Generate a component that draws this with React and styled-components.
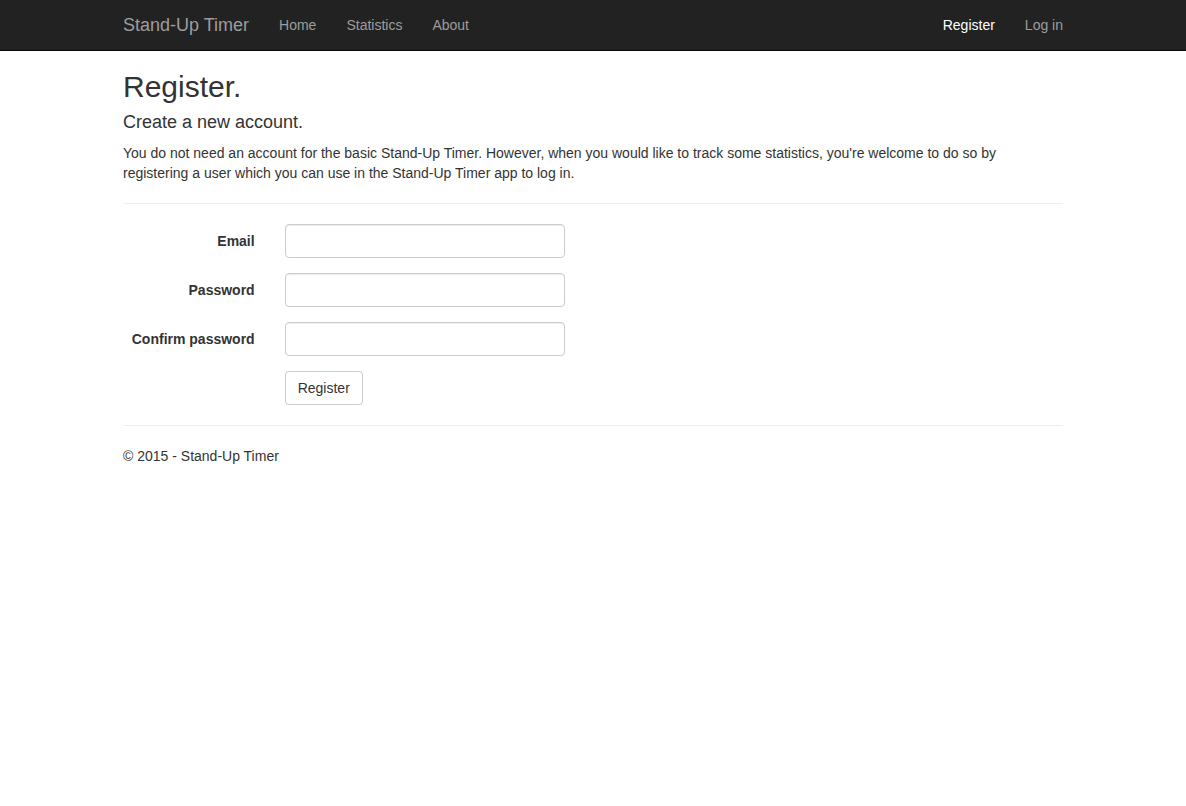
import styled, { createGlobalStyle } from "styled-components";

const GlobalStyle = createGlobalStyle`
  html, body {
    margin: 0;
    padding: 0;
    background: #fff;
  }
  body {
    font-family: "Liberation Sans", Arial, Helvetica, sans-serif;
    font-size: 14px;
    line-height: 1.42857143;
    color: #333;
  }
  * {
    box-sizing: border-box;
  }
`;

const Navbar = styled.nav`
  height: 51px;
  margin-bottom: -1px;
  background-color: #222;
  border-bottom: 1px solid #080808;
`;

const NavContainer = styled.div`
  width: 970px;
  margin: 0 auto;
  padding: 0 15px;
  display: flex;
  align-items: flex-start;
`;

const Brand = styled.a`
  height: 50px;
  padding: 15px;
  margin-left: -15px;
  font-size: 18px;
  line-height: 20px;
  color: #9d9d9d;
  text-decoration: none;
`;

const NavList = styled.ul`
  display: flex;
  list-style: none;
  margin: 0;
  padding: 0;
  margin-left: ${(p) => (p.$right ? "auto" : "0")};
  margin-right: ${(p) => (p.$right ? "-15px" : "0")};
`;

const NavLink = styled.a`
  display: block;
  padding: 15px;
  line-height: 20px;
  color: ${(p) => (p.$active ? "#fff" : "#9d9d9d")};
  text-decoration: none;
`;

const Container = styled.div`
  position: relative;
  width: 970px;
  margin: 0 auto;
  padding: 0 15px;
`;

const Title = styled.h2`
  margin: 20px 0 10px;
  font-size: 30px;
  font-weight: 500;
  line-height: 1.1;
`;

const Subtitle = styled.h4`
  margin: 10px 0 10px;
  font-size: 18px;
  font-weight: 500;
  line-height: 1.1;
`;

const Intro = styled.p`
  margin: 0 0 10px;
`;

const Rule = styled.hr`
  margin: 20px 0;
  border: 0;
  border-top: 1px solid #eee;
  height: 0;
`;

const Form = styled.form`
  display: flex;
  flex-direction: column;
  gap: 15px;
`;

const FormGroup = styled.div`
  display: flex;
  margin: 0 -15px;
`;

const Label = styled.label`
  width: 161.67px;
  padding: 7px 15px 0;
  text-align: right;
  font-weight: bold;
  line-height: 20px;
`;

const Field = styled.div`
  flex: 1;
  padding: 0 15px;
`;

const Input = styled.input`
  display: block;
  width: 280px;
  height: 34px;
  padding: 6px 12px;
  font: inherit;
  color: #555;
  background: #fff;
  border: 1px solid #ccc;
  border-radius: 4px;
  box-shadow: inset 0 1px 1px rgba(0, 0, 0, 0.075);
`;

const Button = styled.button`
  height: 34px;
  padding: 6px 12px;
  font: inherit;
  line-height: 20px;
  color: #333;
  background: #fff;
  border: 1px solid #ccc;
  border-radius: 4px;
`;

const Footer = styled.footer`
  p {
    margin: 0 0 10px;
  }
`;

const fields = [
  { label: "Email", type: "email" },
  { label: "Password", type: "password" },
  { label: "Confirm password", type: "password" },
];

export default function App() {
  return (
    <>
      <GlobalStyle />
      <Navbar>
        <NavContainer>
          <Brand href="#">Stand-Up Timer</Brand>
          <NavList>
            <li><NavLink href="#">Home</NavLink></li>
            <li><NavLink href="#">Statistics</NavLink></li>
            <li><NavLink href="#">About</NavLink></li>
          </NavList>
          <NavList $right>
            <li><NavLink href="#" $active>Register</NavLink></li>
            <li><NavLink href="#">Log in</NavLink></li>
          </NavList>
        </NavContainer>
      </Navbar>
      <Container>
        <Title>Register.</Title>
        <Subtitle>Create a new account.</Subtitle>
        <Intro>
          You do not need an account for the basic Stand-Up Timer. However, when you would like to
          track some statistics, you're welcome to do so by registering a user which you can use in
          the Stand-Up Timer app to log in.
        </Intro>
        <Rule />
        <Form onSubmit={(e) => e.preventDefault()}>
          {fields.map((f) => (
            <FormGroup key={f.label}>
              <Label>{f.label}</Label>
              <Field>
                <Input type={f.type} />
              </Field>
            </FormGroup>
          ))}
          <FormGroup>
            <Label />
            <Field>
              <Button type="submit">Register</Button>
            </Field>
          </FormGroup>
        </Form>
        <Rule />
        <Footer>
          <p>© 2015 - Stand-Up Timer</p>
        </Footer>
      </Container>
    </>
  );
}
